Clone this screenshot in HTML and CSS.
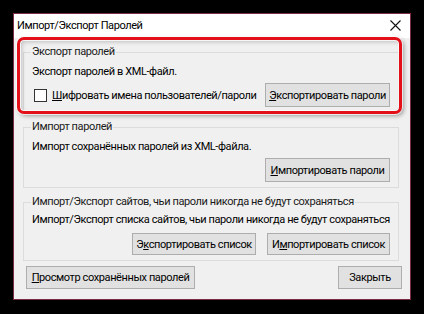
FILE: index.html
```html
<!DOCTYPE html>
<html lang="ru">
<head>
  <meta charset="UTF-8">
  <title>Импорт/Экспорт Паролей</title>
  <link rel="stylesheet" href="styles.css">
</head>
<body>
  <div class="window">
    <div class="titlebar">
      <span class="title">Импорт/Экспорт Паролей</span>
      <svg class="close" width="11" height="11" viewBox="0 0 11 11">
        <path d="M0.5 0.5 L10.5 10.5 M10.5 0.5 L0.5 10.5" stroke="#111" stroke-width="1.1" fill="none"/>
      </svg>
    </div>

    <div class="client">
      <fieldset class="group group-export">
        <legend>Экспорт паролей</legend>
        <div class="desc">Экспорт паролей в XML-файл.</div>
        <div class="row">
          <label class="check"><span class="box"></span><span><u>Ш</u>ифровать имена пользователей/пароли</span></label>
          <button class="btn w125"><u>Э</u>кспортировать пароли</button>
        </div>
      </fieldset>

      <fieldset class="group group-import">
        <legend>Импорт паролей</legend>
        <div class="desc">Импорт сохранённых паролей из XML-файла.</div>
        <div class="row end">
          <button class="btn w125"><u>И</u>мпортировать пароли</button>
        </div>
      </fieldset>

      <fieldset class="group group-sites">
        <legend>Импорт/Экспорт сайтов, чьи пароли никогда не будут сохраняться</legend>
        <div class="desc">Импорт/Экспорт списка сайтов, чьи пароли никогда не будут сохраняться</div>
        <div class="row end gap">
          <button class="btn w124">Э<u>к</u>спортировать список</button>
          <button class="btn w123">И<u>м</u>портировать список</button>
        </div>
      </fieldset>

      <div class="footer">
        <button class="btn w169"><u>П</u>росмотр сохранённых паролей</button>
        <button class="btn w64">Закрыть</button>
      </div>
    </div>

    <!-- red highlight drawn over the export group -->
    <div class="highlight"></div>
  </div>
</body>
</html>
```

FILE: styles.css
```css
body {
  margin: 0;
  background-color: #000;
  font-family: Roboto, "Liberation Sans", sans-serif;
  font-size: 11px;
  letter-spacing: -0.4px;
  color: #000;
  white-space: nowrap;
}
.window {
  position: relative;
  margin: 13px 0 0 13px;
  width: 398px;
  height: 287px;
  box-sizing: border-box;
  border: 1px solid #7c2b45;
  background-color: #f0f0f0;
}
.titlebar {
  height: 24px;
  background-color: #fff;
  display: flex;
  align-items: center;
  justify-content: space-between;
  padding: 0 9px 0 3px;
}
.title {
  line-height: 16px;
}
.close {
  margin-top: -2px;
}
.client {
  padding: 6px 11px 0 9px;
}
.group {
  margin: 0;
  padding: 0 8px 5px 8px;
  border: 1px solid #dcdcdc;
  min-width: 0;
}
.group legend {
  padding: 0 1px;
  margin-left: -1px;
  line-height: 16px;
  color: #1a1a1a;
}
.group + .group {
  margin-top: 6px;
}
.desc {
  line-height: 16px;
  margin-top: 4px;
}
.row {
  display: flex;
  align-items: center;
  justify-content: space-between;
  margin-top: 3px;
}
.group-sites .desc {
  margin-top: 2px;
}
.group-sites .row {
  margin-top: 5px;
}
.row.end {
  justify-content: flex-end;
}
.row.gap {
  gap: 11px;
}
.check {
  display: flex;
  align-items: center;
  margin-left: 2px;
}
.box {
  width: 11px;
  height: 11px;
  border: 1px solid #333;
  background-color: #fff;
  margin-right: 5px;
}
.btn {
  font-family: inherit;
  font-size: inherit;
  letter-spacing: inherit;
  height: 24px;
  padding: 0;
  background-color: #e1e1e1;
  border: 1px solid #adadad;
  color: #000;
  text-align: center;
  white-space: nowrap;
}
.group-sites .btn {
  height: 22px;
}
.footer .btn {
  height: 23px;
}
.w125 { width: 125px; }
.w124 { width: 124px; }
.w123 { width: 123px; }
.w169 { width: 169px; }
.w64 { width: 64px; }
.footer {
  display: flex;
  justify-content: space-between;
  margin: 5px -3px 0 3px;
}
.highlight {
  position: absolute;
  left: 3px;
  top: 23px;
  width: 379px;
  height: 71px;
  border: 3px solid #e3101a;
  border-radius: 7px;
  box-shadow: 0 0 0 1px rgba(255, 255, 255, 0.7), 2px 2px 4px rgba(0, 0, 0, 0.35),
    inset 0 0 0 1px rgba(255, 255, 255, 0.8), inset 2px 2px 4px rgba(0, 0, 0, 0.2);
  pointer-events: none;
}
```
